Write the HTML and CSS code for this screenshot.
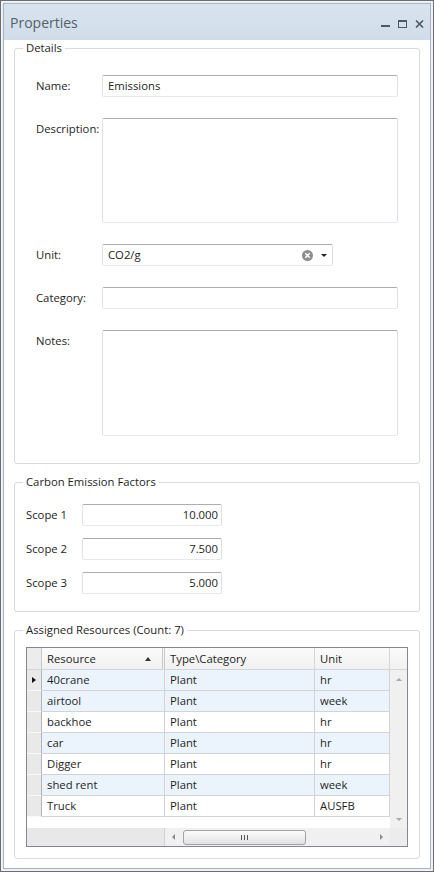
FILE: index.html
```html
<!DOCTYPE html>
<html lang="en">
<head>
  <meta charset="UTF-8">
  <title>Properties</title>
  <link rel="stylesheet" href="styles.css">
</head>
<body>

<div class="window">
  <div class="frame">

    <!-- Title bar -->
    <div class="titlebar">
      <span class="title">Properties</span>
      <div class="win-btns">
        <svg width="9" height="8" viewBox="0 0 9 8"><rect x="0" y="5" width="9" height="2" fill="#4d5865"/></svg>
        <svg width="9" height="8" viewBox="0 0 9 8"><rect x="0.5" y="0.5" width="8" height="7" fill="none" stroke="#4d5865"/><rect x="0" y="0" width="9" height="2" fill="#4d5865"/></svg>
        <svg width="9" height="8" viewBox="0 0 9 8"><path d="M1 0.5 L8 7.5 M8 0.5 L1 7.5" stroke="#4d5865" stroke-width="1.6"/></svg>
      </div>
    </div>

    <div class="panel-body">

      <!-- Details -->
      <fieldset class="group">
        <legend>Details</legend>
        <div class="form">
          <label>Name:</label>
          <div class="input">Emissions</div>

          <label>Description:</label>
          <div class="input"></div>

          <label>Unit:</label>
          <div class="input combo">
            <span class="combo-value">CO2/g</span>
            <svg class="combo-clear" width="11" height="11" viewBox="0 0 11 11"><circle cx="5.5" cy="5.5" r="5.5" fill="#8e8e8e"/><path d="M3.3 3.3 L7.7 7.7 M7.7 3.3 L3.3 7.7" stroke="#fff" stroke-width="1.5"/></svg>
            <span class="combo-arrow"></span>
          </div>

          <label>Category:</label>
          <div class="input"></div>

          <label>Notes:</label>
          <div class="input"></div>
        </div>
      </fieldset>

      <!-- Carbon Emission Factors -->
      <fieldset class="group">
        <legend>Carbon Emission Factors</legend>
        <div class="scope-form">
          <label>Scope 1</label>
          <div class="input num">10.000</div>
          <label>Scope 2</label>
          <div class="input num">7.500</div>
          <label>Scope 3</label>
          <div class="input num">5.000</div>
        </div>
      </fieldset>

      <!-- Assigned Resources -->
      <fieldset class="group">
        <legend>Assigned Resources (Count: 7)</legend>
        <div class="grid-wrap">
          <div class="datagrid">
            <div class="hd hd-corner"></div>
            <div class="hd sep2">Resource <span class="sort-up"></span></div>
            <div class="hd">Type\Category</div>
            <div class="hd">Unit</div>
            <div class="hd hd-last"></div>

            <div class="vscroll">
              <span class="arr-up"></span>
              <span class="arr-down"></span>
            </div>

            <div class="rh alt"><span class="cur"></span></div>
            <div class="cell alt sep2">40crane</div>
            <div class="cell alt">Plant</div>
            <div class="cell alt">hr</div>

            <div class="rh"></div>
            <div class="cell alt sep2">airtool</div>
            <div class="cell alt">Plant</div>
            <div class="cell alt">week</div>

            <div class="rh"></div>
            <div class="cell sep2">backhoe</div>
            <div class="cell">Plant</div>
            <div class="cell">hr</div>

            <div class="rh"></div>
            <div class="cell alt sep2">car</div>
            <div class="cell alt">Plant</div>
            <div class="cell alt">hr</div>

            <div class="rh"></div>
            <div class="cell sep2">Digger</div>
            <div class="cell">Plant</div>
            <div class="cell">hr</div>

            <div class="rh"></div>
            <div class="cell alt sep2">shed rent</div>
            <div class="cell alt">Plant</div>
            <div class="cell alt">week</div>

            <div class="rh"></div>
            <div class="cell sep2">Truck</div>
            <div class="cell">Plant</div>
            <div class="cell">AUSFB</div>

            <div class="empty-row"></div>

            <div class="hs-frozen"></div>
            <div class="hscroll">
              <span class="arr-left"></span>
              <span class="thumb"><span class="grip"></span></span>
              <span class="arr-right"></span>
            </div>
            <div class="hs-corner"></div>
          </div>
        </div>
      </fieldset>

    </div>
  </div>
</div>

</body>
</html>
```

FILE: styles.css
```css
* {
  box-sizing: border-box;
}

body {
  margin: 0;
  font-family: "Open Sans", "Noto Sans", sans-serif;
  font-size: 11.3px;
  color: #1e1e1e;
  background: #fff;
}

.window {
  width: 434px;
  height: 872px;
  border: 1px solid #6b6f75;
  padding: 2px;
  background: #eef1f5;
}

.frame {
  height: 100%;
  border: 1px solid #a7b3c1;
  background: #fff;
  display: flex;
  flex-direction: column;
}

/* title bar */
.titlebar {
  height: 36px;
  flex: none;
  display: flex;
  align-items: center;
  padding: 0 6px;
  background: linear-gradient(#d8e3ee, #d0dde9);
}

.title {
  flex: 1;
  font-size: 14px;
  color: #56606b;
}

.win-btns {
  display: flex;
  gap: 8px;
  align-items: center;
  margin-top: 3px;
}

.win-btns svg {
  display: block;
}

.panel-body {
  flex: 1;
  padding: 0 10px;
}

/* group boxes */
.group {
  margin: 0;
  padding: 0;
  min-width: 0;
  border: 1px solid #d5dbe1;
  border-radius: 3px;
}

.group + .group {
  margin-top: 10px;
}

.group legend {
  margin-left: 8px;
  padding: 0 3px;
  line-height: 16px;
}

label {
  line-height: 22px;
}

.input {
  height: 100%;
  border: 1px solid;
  border-color: #abadb3 #dbdfe6 #e3e9ef #e2e3ea;
  border-radius: 2px;
  padding: 0 5px;
  line-height: 20px;
  background: #fff;
}

.form {
  display: grid;
  grid-template-columns: 66px 1fr;
  grid-template-rows: 22px 105px 22px 22px 106px;
  row-gap: 21px;
  padding: 19px 21px 27px;
}

/* combo box */
.combo {
  width: 231px;
  display: flex;
  align-items: center;
  padding-right: 3px;
}

.combo-value {
  flex: 1;
}

.combo-clear {
  display: block;
  margin-right: 8px;
}

.combo-arrow {
  width: 0;
  height: 0;
  border-left: 3px solid transparent;
  border-right: 3px solid transparent;
  border-top: 3px solid #222;
  margin-right: 2px;
}

/* scope inputs */
.scope-form {
  display: grid;
  grid-template-columns: 56px 140px;
  grid-auto-rows: 22px;
  row-gap: 12px;
  padding: 14px 11px 17px;
}

.num {
  text-align: right;
  padding-right: 3px;
}

/* data grid */
.grid-wrap {
  padding: 9px 11px 11px;
}

.datagrid {
  border: 1px solid #828790;
  display: grid;
  grid-template-columns: 15px 123px 150px 75px 17px;
  grid-template-rows: 22px repeat(7, 21px) 11px 18px;
  background: #fff;
}

.hd {
  background: linear-gradient(#fbfbfb, #f1f1f1);
  border-right: 1px solid #d5d5d5;
  border-bottom: 1px solid #d5d5d5;
  padding: 0 5px;
  line-height: 21px;
  display: flex;
  align-items: center;
}

.hd-corner {
  background: #ececec;
  border-right: 1px solid #c8c8c8;
}

.hd-last {
  border-right: none;
}

.sort-up {
  width: 0;
  height: 0;
  margin-left: auto;
  margin-right: 6px;
  border-left: 3px solid transparent;
  border-right: 3px solid transparent;
  border-bottom: 4px solid #333;
}

.sep2 {
  border-right: 3px double #c9c9c9;
}

.rh {
  background: #e9e9e9;
  border-right: 1px solid #b5b5b5;
  border-bottom: 1px solid #f9f9f9;
  display: flex;
  align-items: center;
  justify-content: center;
}

.cur {
  width: 0;
  height: 0;
  border-top: 3.5px solid transparent;
  border-bottom: 3.5px solid transparent;
  border-left: 4px solid #111;
}

.rh.alt {
  background: #e9e9e9;
}

.cell {
  padding: 0 5px;
  line-height: 20px;
  border-right: 1px solid #d3d3d3;
  border-bottom: 1px solid #d3d3d3;
  white-space: nowrap;
}

.cell.alt {
  background: #ebf4fd;
}

.vscroll {
  grid-column: 5;
  grid-row: 2 / span 8;
  background: #f0f0f0;
  display: flex;
  flex-direction: column;
  justify-content: space-between;
  align-items: center;
  padding: 8px 0 7px;
}

.arr-up,
.arr-down {
  width: 0;
  height: 0;
  border-left: 3px solid transparent;
  border-right: 3px solid transparent;
}

.arr-up {
  border-bottom: 3px solid #a6a6a6;
}

.arr-down {
  border-top: 3px solid #a6a6a6;
}

.empty-row {
  grid-column: 1 / span 4;
}

.hs-frozen {
  grid-column: 1 / span 2;
  background: #e8e8e8;
  border-right: 1px solid #d0d0d0;
}

.hscroll {
  grid-column: 3 / span 2;
  background: #f0f0f0;
  display: flex;
  align-items: center;
  padding: 0 7px;
}

.arr-left,
.arr-right {
  width: 0;
  height: 0;
  border-top: 3px solid transparent;
  border-bottom: 3px solid transparent;
}

.arr-left {
  border-right: 3px solid #8a8a8a;
}

.arr-right {
  border-left: 3px solid #8a8a8a;
  margin-left: auto;
}

.thumb {
  width: 123px;
  height: 15px;
  margin-left: 8px;
  border: 1px solid #a2a2a2;
  border-radius: 3px;
  background: linear-gradient(#fbfbfb, #e2e2e2);
  display: flex;
  align-items: center;
  justify-content: center;
}

.grip {
  width: 7px;
  height: 5px;
  background: repeating-linear-gradient(90deg, #555 0 1px, transparent 1px 3px);
}

.hs-corner {
  background: #ececec;
}
```
